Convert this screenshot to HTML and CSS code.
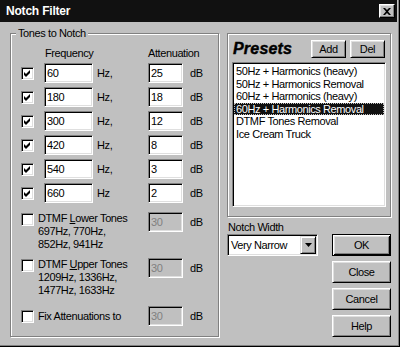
FILE: index.html
```html
<!DOCTYPE html>
<html lang="en">
<head>
  <meta charset="UTF-8">
  <title>Notch Filter</title>
  <link rel="stylesheet" href="styles.css">
</head>
<body>
  <div class="dialog">
    <div class="titlebar">
      <span>Notch Filter</span>
      <span class="close">
        <svg width="8" height="7" viewBox="0 0 8 7"><path d="M0 0h2l2 2 2-2h2L5 3.5 8 7H6L4 5 2 7H0l3-3.5z" fill="#000"/></svg>
      </span>
    </div>
    <div class="content">
      <div class="group tones">
        <span class="group-title">Tones to Notch</span>
        <div class="tone-row head">
          <span></span><span>Frequency</span><span></span><span>Attenuation</span>
        </div>
        <div class="tone-row">
          <span class="check"><svg width="7" height="7" viewBox="0 0 7 7"><polygon points="0,2 2,4 6,0 6,3 2,7 0,5"/></svg></span>
          <input class="field freq" value="60"><span>Hz,</span>
          <input class="field atten" value="25"><span>dB</span>
        </div>
        <div class="tone-row">
          <span class="check"><svg width="7" height="7" viewBox="0 0 7 7"><polygon points="0,2 2,4 6,0 6,3 2,7 0,5"/></svg></span>
          <input class="field freq" value="180"><span>Hz,</span>
          <input class="field atten" value="18"><span>dB</span>
        </div>
        <div class="tone-row">
          <span class="check"><svg width="7" height="7" viewBox="0 0 7 7"><polygon points="0,2 2,4 6,0 6,3 2,7 0,5"/></svg></span>
          <input class="field freq" value="300"><span>Hz,</span>
          <input class="field atten" value="12"><span>dB</span>
        </div>
        <div class="tone-row">
          <span class="check"><svg width="7" height="7" viewBox="0 0 7 7"><polygon points="0,2 2,4 6,0 6,3 2,7 0,5"/></svg></span>
          <input class="field freq" value="420"><span>Hz,</span>
          <input class="field atten" value="8"><span>dB</span>
        </div>
        <div class="tone-row">
          <span class="check"><svg width="7" height="7" viewBox="0 0 7 7"><polygon points="0,2 2,4 6,0 6,3 2,7 0,5"/></svg></span>
          <input class="field freq" value="540"><span>Hz,</span>
          <input class="field atten" value="3"><span>dB</span>
        </div>
        <div class="tone-row">
          <span class="check"><svg width="7" height="7" viewBox="0 0 7 7"><polygon points="0,2 2,4 6,0 6,3 2,7 0,5"/></svg></span>
          <input class="field freq" value="660"><span>Hz</span>
          <input class="field atten" value="2"><span>dB</span>
        </div>

        <div class="option-row lower">
          <span class="check"></span>
          <span class="option-text">DTMF <u>L</u>ower Tones<br>697Hz, 770Hz,<br>852Hz, 941Hz</span>
          <input class="field atten" value="30" disabled><span class="unit">dB</span>
        </div>
        <div class="option-row upper">
          <span class="check"></span>
          <span class="option-text">DTMF <u>U</u>pper Tones<br>1209Hz, 1336Hz,<br>1477Hz, 1633Hz</span>
          <input class="field atten" value="30" disabled><span class="unit">dB</span>
        </div>
        <div class="option-row fix">
          <span class="check"></span>
          <span class="option-text">Fix Attenuations to</span>
          <input class="field atten" value="30" disabled><span class="unit">dB</span>
        </div>
      </div>

      <div class="side">
        <div class="group presets">
          <div class="presets-head">
            <span class="presets-title">Presets</span>
            <button class="btn small">Add</button>
            <button class="btn small">Del</button>
          </div>
          <div class="listbox">
            <div class="item">50Hz + Harmonics (heavy)</div>
            <div class="item">50Hz + Harmonics Removal</div>
            <div class="item">60Hz + Harmonics (heavy)</div>
            <div class="item selected">60Hz + Harmonics Removal</div>
            <div class="item">DTMF Tones Removal</div>
            <div class="item">Ice Cream Truck</div>
          </div>
        </div>

        <div class="bottom">
          <div class="width-col">
            <div class="width-label">Notch Width</div>
            <div class="combo">
              <span class="combo-text">Very Narrow</span>
              <span class="combo-arrow"><svg width="7" height="4" viewBox="0 0 7 4"><polygon points="0,0 7,0 3.5,4"/></svg></span>
            </div>
          </div>
          <div class="buttons">
            <button class="btn default">OK</button>
            <button class="btn">Close</button>
            <button class="btn">Cancel</button>
            <button class="btn">Help</button>
          </div>
        </div>
      </div>
    </div>
  </div>
</body>
</html>
```

FILE: styles.css
```css
body {
  margin: 0;
  background: #c0c0c0;
  font-family: "Liberation Sans", Arial, sans-serif;
  font-size: 11px;
  letter-spacing: -0.4px;
  color: #000;
}
.dialog {
  width: 400px;
  height: 347px;
  box-sizing: border-box;
  padding-right: 2px;
  border-right: 1px solid #000;
  border-bottom: 1px solid #000;
  box-shadow: inset -1px -1px 0 #808080;
}
.titlebar {
  height: 22px;
  background: #111;
  color: #fff;
  display: flex;
  align-items: center;
  justify-content: space-between;
  padding: 0 2px 0 6px;
  font-weight: bold;
  font-size: 12px;
  letter-spacing: -0.2px;
}
.close {
  width: 16px;
  height: 14px;
  box-sizing: border-box;
  background: #c0c0c0;
  border: 1px solid;
  border-color: #fff #000 #000 #fff;
  box-shadow: inset -1px -1px 0 #808080, inset 1px 1px 0 #dfdfdf;
  display: flex;
  align-items: center;
  justify-content: center;
}
.content {
  display: flex;
  padding-left: 10px;
}

/* group boxes */
.group {
  position: relative;
  box-sizing: border-box;
  margin-top: 11px;
  border: 1px solid #808080;
  box-shadow: 1px 1px 0 #fff, inset 1px 1px 0 #fff;
}
.group-title {
  position: absolute;
  top: -7px;
  left: 5px;
  padding: 0 2px;
  line-height: 13px;
  background: #c0c0c0;
}
.tones {
  width: 209px;
  height: 304px;
  padding: 12px 0 0 10px;
}

/* tone rows */
.tone-row {
  display: grid;
  grid-template-columns: 23px 53px 51px 42px auto;
  align-items: center;
  height: 20px;
  margin-bottom: 4px;
}
.tone-row.head {
  height: 13px;
  margin-bottom: 4px;
}
.tone-row.head span:nth-child(2) {
  padding-left: 1px;
}
.option-row {
  display: grid;
  grid-template-columns: 17px 110px 42px auto;
  align-items: start;
}
.option-row.lower {
  margin-top: 9px;
}
.option-row.upper {
  margin-top: 7px;
}
.option-row.fix {
  margin-top: 9px;
  align-items: center;
}
.option-text {
  line-height: 13px;
}
.option-row .unit {
  line-height: 20px;
}
.option-row .check {
  margin-top: 1px;
}
.option-row.fix .check {
  margin-top: 0;
}

.check {
  width: 13px;
  height: 13px;
  box-sizing: border-box;
  background: #fff;
  border: 1px solid;
  border-color: #808080 #fff #fff #808080;
  box-shadow: inset 1px 1px 0 #000, inset -1px -1px 0 #dfdfdf;
  display: flex;
  align-items: center;
  justify-content: center;
}
.field {
  box-sizing: border-box;
  height: 20px;
  margin: 0;
  padding: 0 2px;
  font: inherit;
  letter-spacing: inherit;
  color: #000;
  background: #fff;
  border: 1px solid;
  border-color: #808080 #fff #fff #808080;
  box-shadow: inset 1px 1px 0 #000, inset -1px -1px 0 #dfdfdf;
  outline: none;
}
.field:disabled {
  background: #c0c0c0;
  color: #808080;
}
.freq {
  width: 49px;
}
.atten {
  width: 35px;
}

/* presets */
.side {
  margin-left: 8px;
  width: 164px;
}
.presets {
  height: 184px;
  padding: 6px 4px 9px 4px;
}
.presets-head {
  display: flex;
  align-items: center;
  gap: 4px;
  height: 18px;
  padding-right: 1px;
}
.presets-title {
  flex: 1;
  margin-left: 1px;
  font-size: 16px;
  font-weight: bold;
  font-style: italic;
  letter-spacing: 0.2px;
  -webkit-text-stroke: 0.4px #000;
}
.listbox {
  box-sizing: border-box;
  height: 145px;
  margin-top: 4px;
  padding: 2px 1px;
  background: #fff;
  border: 1px solid;
  border-color: #808080 #fff #fff #808080;
  box-shadow: inset 1px 1px 0 #000, inset -1px -1px 0 #dfdfdf;
}
.item {
  line-height: 12.5px;
  padding-left: 2px;
}
.item.selected {
  background: #111;
  color: #fff;
  outline: 1px dotted #c0c0c0;
  outline-offset: -1px;
}

/* buttons */
.btn {
  box-sizing: border-box;
  width: 59px;
  height: 22px;
  margin: 0;
  padding: 0;
  font: inherit;
  letter-spacing: inherit;
  color: #000;
  background: #c0c0c0;
  border: 1px solid;
  border-color: #fff #000 #000 #fff;
  box-shadow: inset 1px 1px 0 #dfdfdf, inset -1px -1px 0 #808080;
}
.btn.small {
  width: 35px;
  height: 18px;
}
.btn.default {
  border: 1px solid #000;
  box-shadow: inset 1px 1px 0 #fff, inset -1px -1px 0 #000, inset 2px 2px 0 #dfdfdf, inset -2px -2px 0 #808080;
}

/* notch width + dialog buttons */
.bottom {
  display: flex;
  justify-content: space-between;
  margin-top: 4px;
}
.width-label {
  line-height: 13px;
  padding-left: 1px;
}
.combo {
  box-sizing: border-box;
  width: 91px;
  height: 22px;
  display: flex;
  align-items: center;
  padding: 2px;
  background: #fff;
  border: 1px solid;
  border-color: #808080 #fff #fff #808080;
  box-shadow: inset 1px 1px 0 #000, inset -1px -1px 0 #dfdfdf;
}
.combo-text {
  flex: 1;
  padding-left: 1px;
}
.combo-arrow {
  box-sizing: border-box;
  width: 16px;
  height: 18px;
  margin-right: -1px;
  background: #c0c0c0;
  border: 1px solid;
  border-color: #dfdfdf #000 #000 #dfdfdf;
  box-shadow: inset 1px 1px 0 #fff, inset -1px -1px 0 #808080;
  display: flex;
  align-items: center;
  justify-content: center;
}
.buttons {
  display: flex;
  flex-direction: column;
  gap: 5px;
  margin-top: 13px;
}
```
